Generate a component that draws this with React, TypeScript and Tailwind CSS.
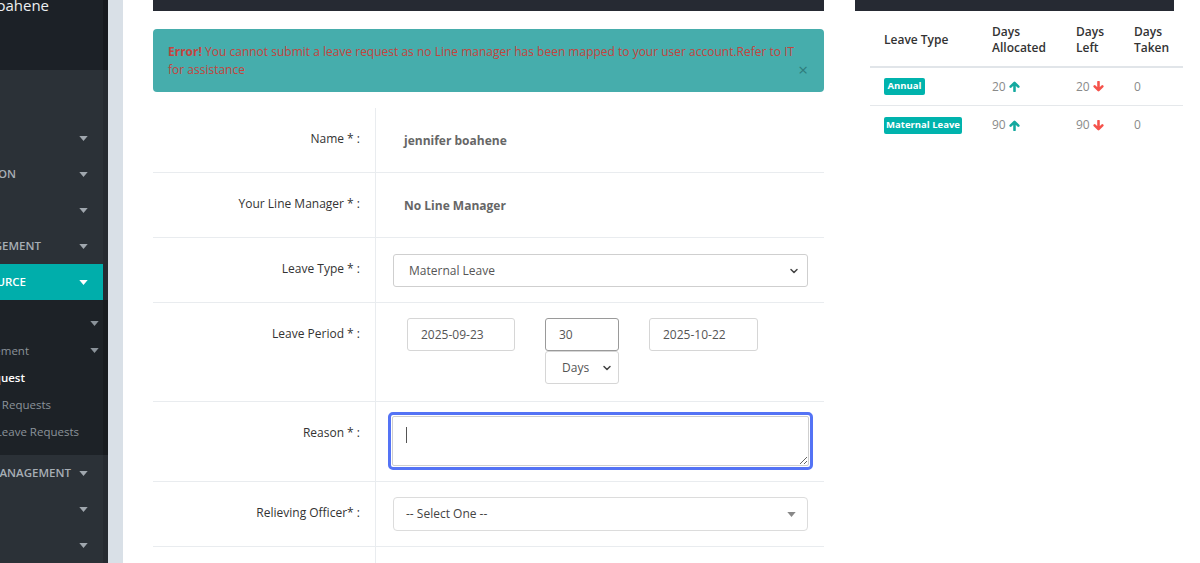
import { ReactNode } from 'react';
import { ChevronDown } from 'lucide-react';

// small solid caret used by the sidebar and select2 style dropdowns
function Caret({ className = '' }: { className?: string }) {
  return (
    <svg viewBox="0 0 10 6" className={`w-[9px] h-[5px] shrink-0 ${className}`}>
      <path d="M0 0h10L5 6z" fill="currentColor" />
    </svg>
  );
}

// thick arrow like the font-awesome one used in the balances table
function Arrow({ up, className = '' }: { up: boolean; className?: string }) {
  return (
    <svg viewBox="0 0 12 12" className={`w-[11px] h-[11px] ${up ? '' : 'rotate-180'} ${className}`}>
      <path d="M6 11V2.5M1.8 6.2 6 2l4.2 4.2" fill="none" stroke="currentColor" strokeWidth="2.8" strokeLinecap="round" strokeLinejoin="round" />
    </svg>
  );
}

// text that is cut by the left edge: it ends at the box's right side
function Clipped({ width, children, className = '' }: { width: string; children: ReactNode; className?: string }) {
  return (
    <div className={`flex justify-end shrink-0 ${width}`}>
      <span className={`shrink-0 whitespace-nowrap ${className}`}>{children}</span>
    </div>
  );
}

function MenuItem({ text, width, active = false }: { text: string; width: string; active?: boolean }) {
  return (
    <div className={`flex items-center h-[36px] ${active ? 'bg-[#00aeab]' : ''}`}>
      <Clipped width={width} className={`text-[11.5px] font-semibold uppercase ${active ? 'text-white' : 'text-[#a7aeb5]'}`}>
        {text}
      </Clipped>
      <Caret className={`ml-auto mr-[15px] ${active ? 'text-white' : 'text-[#a0a7ae]'}`} />
    </div>
  );
}

function SubItem({ text, width, caret = false, current = false }: { text: string; width: string; caret?: boolean; current?: boolean }) {
  return (
    <div className="flex items-center h-[27px]">
      <Clipped width={width} className={`text-[11.5px] ${current ? 'text-white font-semibold' : 'text-[#8b939a]'}`}>
        {text}
      </Clipped>
      {caret && <Caret className="ml-auto mr-[4px] text-[#8b939a]" />}
    </div>
  );
}

function Sidebar() {
  return (
    <aside className="w-[108px] shrink-0 overflow-hidden flex flex-col">
      <div className="h-[70px] bg-[#1c2127] border-r-[5px] border-[#161a1f]">
        <Clipped width="w-[49px]" className="text-[15px] text-[#eceff1] leading-[20px] -mt-[5px] block">
          jennifer boahene
        </Clipped>
      </div>
      <div className="bg-[#2b3137] border-r-[5px] border-[#262b31] pt-[50px]">
        <MenuItem text="Dashboard" width="w-[0px]" />
        <MenuItem text="Administration" width="w-[16px]" />
        <MenuItem text="Reports" width="w-[0px]" />
        <MenuItem text="Asset Management" width="w-[41px]" />
        <MenuItem text="Human Resource" width="w-[26px]" active />
      </div>
      <div className="bg-[#1d2227] border-r-[5px] border-[#181c20] pt-[10px] pb-[10px]">
        <SubItem text="Employees" width="w-[0px]" caret />
        <SubItem text="Leave Management" width="w-[29px]" caret />
        <SubItem text="Leave Request" width="w-[25px]" current />
        <SubItem text="My Leave Requests" width="w-[51px]" />
        <SubItem text="Approve Leave Requests" width="w-[79px]" />
      </div>
      <div className="flex-1 bg-[#2b3137] border-r-[5px] border-[#262b31]">
        <MenuItem text="Project Management" width="w-[71px]" />
        <MenuItem text="Settings" width="w-[0px]" />
        <MenuItem text="Users" width="w-[0px]" />
      </div>
    </aside>
  );
}

function FormRow({ label, height, children }: { label: string; height: string; children: ReactNode }) {
  return (
    <div className={`flex border-b border-[#e9ecef] ${height}`}>
      <div className="w-[223px] shrink-0 border-r border-[#e9ecef] pr-[15px] pt-[23px] text-right text-[12px] leading-[16px] text-[#333]">
        {label}
      </div>
      <div className="flex-1">{children}</div>
    </div>
  );
}

function Badge({ children, width }: { children: ReactNode; width: string }) {
  return (
    <span className={`inline-flex items-center justify-center h-[17px] ${width} rounded-[2px] bg-[#00b3ad] text-white text-[9.5px] font-bold`}>
      {children}
    </span>
  );
}

function BalanceRow({ badge, badgeWidth, allocated, left, taken, last = false }: { badge: string; badgeWidth: string; allocated: number; left: number; taken: number; last?: boolean }) {
  return (
    <div className={`flex items-center h-[38px] text-[12px] text-[#8a8a8a] ${last ? '' : 'border-b border-[#e5e8eb]'}`}>
      <div className="w-[108px] pl-[14px] flex">
        <Badge width={badgeWidth}>{badge}</Badge>
      </div>
      <div className="w-[84px] pl-[14px] flex items-center gap-[3px]">
        {allocated}
        <Arrow up className="text-[#14a99f]" />
      </div>
      <div className="w-[58px] pl-[14px] flex items-center gap-[3px]">
        {left}
        <Arrow up={false} className="text-[#f5524b]" />
      </div>
      <div className="w-[63px] pl-[14px]">{taken}</div>
    </div>
  );
}

export default function App() {
  return (
    <div className="flex h-[563px] w-[1200px] overflow-hidden bg-white font-['Open_Sans',sans-serif]">
      <Sidebar />
      <div className="w-[15px] shrink-0 bg-[#d9e0e7]" />

      <main className="flex flex-1 bg-white">
        {/* leave request form */}
        <section className="ml-[30px] w-[671px] shrink-0">
          <div className="h-[11px] bg-[#262a33]" />

          <div className="relative mt-[18px] h-[63px] rounded-[4px] bg-[#46adac] pl-[15px] pr-[22px] pt-[14px] text-[12px] leading-[18px] text-[#c4443e]">
            <strong className="font-bold">Error!</strong> You cannot submit a leave request as no Line manager has been mapped to your user account.Refer to IT for assistance
            <span className="absolute right-[16px] top-[32px] text-[17px] leading-[17px] text-[#2f7c7b]">×</span>
          </div>

          <div className="mt-[16px]">
            <FormRow label="Name * :" height="h-[65px]">
              <div className="pl-[28px] pt-[25px] text-[12px] leading-[16px] font-bold text-[#666]">jennifer boahene</div>
            </FormRow>

            <FormRow label="Your Line Manager * :" height="h-[65px]">
              <div className="pl-[28px] pt-[25px] text-[12px] leading-[16px] font-bold text-[#666]">No Line Manager</div>
            </FormRow>

            <FormRow label="Leave Type * :" height="h-[65px]">
              <div className="ml-[17px] mt-[16px] flex h-[33px] w-[415px] items-center rounded-[3px] border border-[#cfcfcf] pl-[15px] pr-[7px] text-[12px] text-[#555]">
                Maternal Leave
                <ChevronDown size={12} strokeWidth={3} className="ml-auto text-[#444]" />
              </div>
            </FormRow>

            <FormRow label="Leave Period * :" height="h-[99px]">
              <div className="ml-[31px] mt-[15px] flex gap-[30px] text-[12px] text-[#555]">
                <div className="flex h-[33px] w-[108px] items-center rounded-[3px] border border-[#d6d6d6] pl-[13px]">2025-09-23</div>
                <div className="flex w-[74px] flex-col">
                  <div className="flex h-[33px] items-center rounded-[3px] border border-[#9a9a9a] pl-[13px]">30</div>
                  <div className="flex h-[33px] items-center rounded-[3px] border border-[#d6d6d6] pl-[16px] pr-[5px]">
                    Days
                    <ChevronDown size={12} strokeWidth={3} className="ml-auto text-[#444]" />
                  </div>
                </div>
                <div className="flex h-[33px] w-[109px] items-center rounded-[3px] border border-[#d6d6d6] pl-[13px]">2025-10-22</div>
              </div>
            </FormRow>

            <FormRow label="Reason * :" height="h-[80px]">
              <div className="relative ml-[12px] mt-[10px] h-[58px] w-[425px] rounded-[5px] border-[3px] border-[#5473f5] p-px">
                <textarea className="block h-full w-full resize-y rounded-[2px] border border-[#cfcfcf] outline-none" />
                <span className="absolute left-[15px] top-[12px] h-[16px] w-px bg-[#555]" />
              </div>
            </FormRow>

            <FormRow label="Relieving Officer* :" height="h-[65px]">
              <div className="ml-[17px] mt-[15px] flex h-[34px] w-[415px] items-center rounded-[4px] border border-[#dcdcdc] pl-[12px] pr-[11px] text-[12px] text-[#444]">
                -- Select One --
                <Caret className="ml-auto w-[8px] text-[#888]" />
              </div>
            </FormRow>

            <FormRow label="Handover Notes * :" height="h-[65px]">
              <div className="ml-[17px] mt-[16px] h-[34px] w-[415px] rounded-[4px] border border-[#cfcfcf]" />
            </FormRow>
          </div>
        </section>

        {/* leave balances */}
        <section className="ml-[31px] w-[319px] shrink-0">
          <div className="h-[11px] bg-[#262a33]" />
          <div className="ml-[15px] w-[313px]">
            <div className="mt-[1px] flex h-[56px] items-center border-b-2 border-[#e1e5e9] pt-[2px] text-[12px] font-semibold leading-[16px] text-[#333]">
              <div className="w-[108px] pl-[14px]">Leave Type</div>
              <div className="w-[84px] pl-[14px]">Days<br />Allocated</div>
              <div className="w-[58px] pl-[14px]">Days<br />Left</div>
              <div className="w-[63px] pl-[14px]">Days<br />Taken</div>
            </div>
            <BalanceRow badge="Annual" badgeWidth="w-[41px]" allocated={20} left={20} taken={0} />
            <BalanceRow badge="Maternal Leave" badgeWidth="w-[78px]" allocated={90} left={90} taken={0} last />
          </div>
        </section>
      </main>
    </div>
  );
}
